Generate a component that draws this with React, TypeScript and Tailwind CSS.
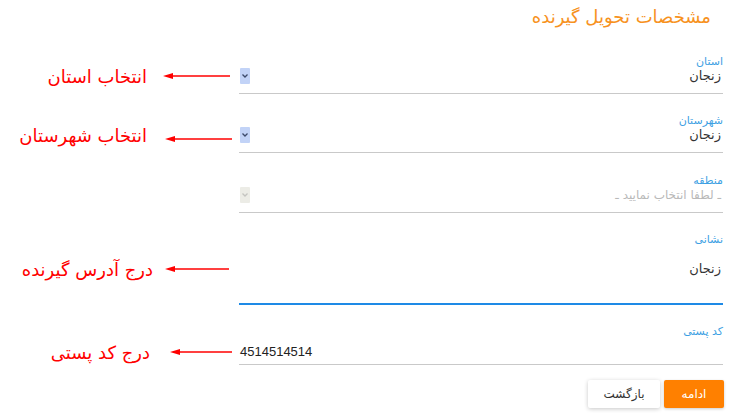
import React from "react";

const fa = { fontFamily: '"DejaVu Sans", "Noto Sans", sans-serif' };

function Arrow({ w }: { w: number }) {
  return (
    <svg width={w} height="8" viewBox={`0 0 ${w} 8`} className="block">
      <line x1="8" y1="4" x2={w} y2="4" stroke="#ff0000" strokeWidth="1.5" />
      <polygon points="0,4 10,1 10,7" fill="#ff0000" />
    </svg>
  );
}

function Note({ text, arrow, textRight, arrowLeft, offset = 0 }: { text: string; arrow: number; textRight: number; arrowLeft: number; offset?: number }) {
  return (
    <div className="relative h-4 w-full">
      <span
        dir="rtl"
        style={{ ...fa, right: 239 - textRight }}
        className="absolute top-1/2 -translate-y-1/2 whitespace-nowrap text-[18px] text-[#ff0000]"
      >
        {text}
      </span>
      <div className="absolute" style={{ left: arrowLeft, top: 4 + offset }}>
        <Arrow w={arrow} />
      </div>
    </div>
  );
}

function Chevron({ disabled }: { disabled?: boolean }) {
  return (
    <div
      className={`ml-[1px] flex h-4 w-[10px] items-center justify-center rounded-[1px] ${
        disabled ? "bg-[#ececE6]" : "bg-[#c2d3f7]"
      }`}
    >
      <svg width="6" height="4" viewBox="0 0 6 4">
        <path d="M0.5 0.5 L3 3 L5.5 0.5" fill="none" stroke={disabled ? "#c4c4c0" : "#3c4a6a"} strokeWidth="1.3" />
      </svg>
    </div>
  );
}

export default function App() {
  return (
    <div className="h-[417px] w-[750px] overflow-hidden bg-white" style={fa}>
      <div className="flex h-[35px] justify-end pr-[39px] pt-[4px]">
        <h1 dir="rtl" className="text-[18px] leading-[26px] text-[#f7921e]">
          مشخصات تحویل گیرنده
        </h1>
      </div>

      {/* استان */}
      <div className="flex">
        <div className="w-[239px] pt-[33px]">
          <Note text="انتخاب استان" arrow={67} textRight={147} arrowLeft={163} />
        </div>
        <div dir="rtl" className="mr-[27px] flex-1 border-b border-[#c9c9c9] pb-[9px] pt-[21px]">
          <div className="h-3 text-[11px] leading-3 text-[#3d9fe3]">استان</div>
          <div className="flex h-4 items-center justify-between">
            <span className="pr-[2px] text-[13px] leading-4 text-[#333]">زنجان</span>
            <Chevron />
          </div>
        </div>
      </div>

      {/* شهرستان */}
      <div className="flex">
        <div className="w-[239px] pt-[33px]">
          <Note text="انتخاب شهرستان" arrow={67} textRight={147} arrowLeft={165} offset={4} />
        </div>
        <div dir="rtl" className="mr-[27px] flex-1 border-b border-[#c9c9c9] pb-[9px] pt-[21px]">
          <div className="h-3 text-[11px] leading-3 text-[#3d9fe3]">شهرستان</div>
          <div className="flex h-4 items-center justify-between">
            <span className="pr-[2px] text-[13px] leading-4 text-[#333]">زنجان</span>
            <Chevron />
          </div>
        </div>
      </div>

      {/* منطقه */}
      <div className="flex">
        <div className="w-[239px]" />
        <div dir="rtl" className="mr-[27px] flex-1 border-b border-[#c9c9c9] pb-[9px] pt-[22px]">
          <div className="h-3 text-[11px] leading-3 text-[#3d9fe3]">منطقه</div>
          <div className="flex h-4 items-center justify-between">
            <span className="pr-[2px] text-[12px] leading-4 text-[#b9b9b9]">ـ لطفا انتخاب نمایید ـ</span>
            <Chevron disabled />
          </div>
        </div>
      </div>

      {/* نشانی */}
      <div className="flex">
        <div className="w-[239px] pt-[48px]">
          <Note text="درج آدرس گیرنده" arrow={64} textRight={153} arrowLeft={165} />
        </div>
        <div dir="rtl" className="mr-[27px] flex-1 border-b-2 border-[#1e8ae6] pb-[26px] pt-[21px]">
          <div className="h-3 text-[11px] leading-3 text-[#3d9fe3]">نشانی</div>
          <div className="mt-[15px] h-4 pr-[2px] text-[13px] leading-4 text-[#333]">زنجان</div>
        </div>
      </div>

      {/* کد پستی */}
      <div className="flex">
        <div className="w-[239px] pt-[39px]">
          <Note text="درج کد پستی" arrow={62} textRight={150} arrowLeft={170} />
        </div>
        <div dir="rtl" className="mr-[27px] flex-1 border-b border-[#c9c9c9] pb-[4px] pt-[21px]">
          <div className="h-3 text-[11px] leading-3 text-[#3d9fe3]">کد پستی</div>
          <div
            dir="ltr"
            className="mt-[6px] h-4 pl-[1px] text-[13px] leading-4 text-[#222]"
            style={{ fontFamily: '"Liberation Sans", Arial, sans-serif' }}
          >
            4514514514
          </div>
        </div>
      </div>

      <div dir="rtl" className="mr-[26px] mt-[15px] flex gap-[4px]">
        <button className="h-[28px] w-[60px] rounded-[2px] bg-[#ff8000] text-[12px] text-white shadow-[0_1px_3px_rgba(0,0,0,0.2)]">
          ادامه
        </button>
        <button className="h-[28px] w-[72px] rounded-[2px] bg-white text-[12px] text-[#333] shadow-[0_1px_4px_rgba(0,0,0,0.22)]">
          بازگشت
        </button>
      </div>
    </div>
  );
}
